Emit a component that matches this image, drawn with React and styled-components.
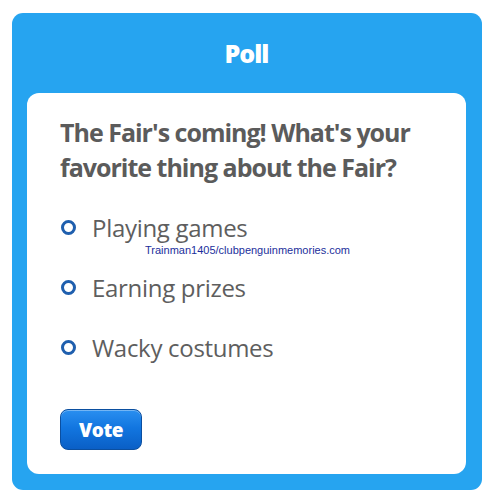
import React from "react";
import styled, { createGlobalStyle } from "styled-components";

const Global = createGlobalStyle`
  html, body { margin: 0; padding: 0; background: #ffffff; }
  body { font-family: "Open Sans", "Liberation Sans", sans-serif; }
`;

const Page = styled.div`
  width: 494px;
  height: 500px;
  padding: 13px 12px 0;
  box-sizing: border-box;
`;

const Panel = styled.div`
  width: 470px;
  height: 477px;
  background: #26a4f0;
  border-radius: 11px;
  display: flex;
  flex-direction: column;
  padding: 0 16px 16px 15px;
  box-sizing: border-box;
`;

const Title = styled.h1`
  margin: 0;
  height: 80px;
  display: flex;
  align-items: center;
  justify-content: center;
  color: #ffffff;
  font-family: "Open Sans", sans-serif;
  font-weight: 800;
  font-size: 25px;
  letter-spacing: -1px;
`;

const Card = styled.div`
  position: relative;
  flex: 1;
  background: #ffffff;
  border-radius: 12px;
  padding: 22px 20px 0 33px;
  display: flex;
  flex-direction: column;
`;

const Question = styled.h2`
  margin: 0;
  color: #5b5b5b;
  font-family: "Open Sans", sans-serif;
  font-weight: 700;
  font-size: 25px;
  line-height: 35px;
  letter-spacing: -1px;
`;

const Options = styled.div`
  display: flex;
  flex-direction: column;
  gap: 25px;
  margin-top: 25px;
`;

const Option = styled.label`
  display: flex;
  align-items: center;
  gap: 16px;
  height: 35px;
  color: #5e5e5e;
  font-family: "Open Sans", sans-serif;
  font-size: 24px;
  letter-spacing: -0.3px;
`;

const Radio = styled.span`
  width: 9px;
  height: 9px;
  border-radius: 50%;
  border: 3px solid #1f5fae;
  margin-left: 1px;
  flex-shrink: 0;
`;

const VoteButton = styled.button`
  margin-top: 44px;
  align-self: flex-start;
  width: 82px;
  height: 41px;
  border-radius: 8px;
  border: 1px solid #0b4fa0;
  background: linear-gradient(#2a8ff0 0%, #1276e0 45%, #0a5fc6 100%);
  box-shadow: inset 0 1px 0 rgba(255,255,255,0.35);
  color: #ffffff;
  font-family: "Open Sans", sans-serif;
  font-weight: 800;
  font-size: 19px;
  letter-spacing: -0.5px;
  padding: 0;
  cursor: pointer;
`;

const Watermark = styled.span`
  position: absolute;
  left: 118px;
  top: 151px;
  font-family: "Liberation Sans", Arial, sans-serif;
  font-size: 11px;
  color: #1c2f9c;
`;

const options = ["Playing games", "Earning prizes", "Wacky costumes"];

export default function App() {
  return (
    <Page>
      <Global />
      <Panel>
        <Title>Poll</Title>
        <Card>
          <Question>The Fair's coming! What's your favorite thing about the Fair?</Question>
          <Options>
            {options.map((o) => (
              <Option key={o}>
                <Radio />
                {o}
              </Option>
            ))}
          </Options>
          <VoteButton>Vote</VoteButton>
          <Watermark>Trainman1405/clubpenguinmemories.com</Watermark>
        </Card>
      </Panel>
    </Page>
  );
}
